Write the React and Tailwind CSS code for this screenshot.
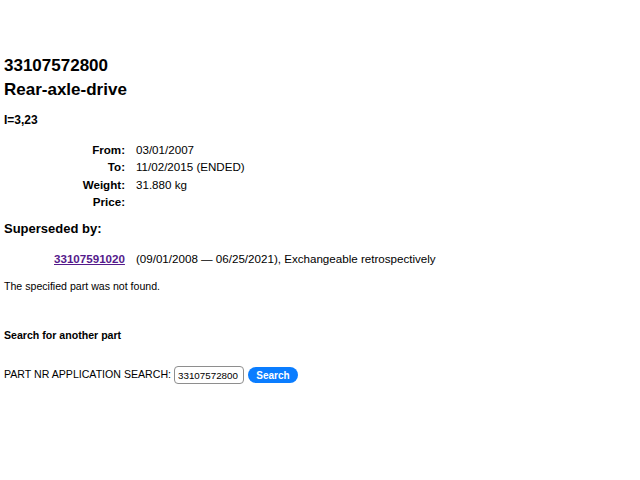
export default function App() {
  const rows = [
    ["From:", "03/01/2007"],
    ["To:", "11/02/2015 (ENDED)"],
    ["Weight:", "31.880 kg"],
    ["Price:", ""],
  ];

  return (
    <div className="min-h-[480px] bg-white px-[4px] pt-[54px] font-['Liberation_Sans',Arial,sans-serif] text-black">
      <h1 className="text-[17px] font-bold leading-[24px]">33107572800</h1>
      <h2 className="text-[17px] font-bold leading-[24px]">Rear-axle-drive</h2>
      <div className="mt-[10px] text-[12px] font-bold leading-[16px]">I=3,23</div>

      <div className="mt-[13px] text-[11.6px] leading-[17.33px]">
        {rows.map(([label, value]) => (
          <div key={label} className="flex">
            <div className="w-[121px] text-right font-bold">{label}</div>
            <div className="ml-[11px]">{value}</div>
          </div>
        ))}
      </div>

      <div className="mt-[10px] text-[13px] font-bold leading-[18px]">Superseded by:</div>

      <div className="mt-[12px] flex pl-[50px] text-[11.6px] leading-[17px]">
        <a href="#" className="font-bold text-[#551a8b] underline">
          33107591020
        </a>
        <span className="ml-[11px]">(09/01/2008 — 06/25/2021), Exchangeable retrospectively</span>
      </div>

      <p className="mt-[12px] text-[10.6px] leading-[14px]">The specified part was not found.</p>

      <div className="mt-[35px] text-[10.6px] font-bold leading-[14px]">Search for another part</div>

      <form className="mt-[24px] flex items-center text-[10.6px]">
        <span>PART NR APPLICATION SEARCH:</span>
        <input
          type="text"
          defaultValue="33107572800"
          className="ml-[3px] h-[18px] w-[70px] rounded-[4px] border border-[#8e8e8e] px-[3px] text-[9.8px] outline-none"
        />
        <button
          type="button"
          className="ml-[4px] h-[16px] w-[50px] rounded-full bg-[#0a7dff] text-[10px] font-bold text-white"
        >
          Search
        </button>
      </form>
    </div>
  );
}
